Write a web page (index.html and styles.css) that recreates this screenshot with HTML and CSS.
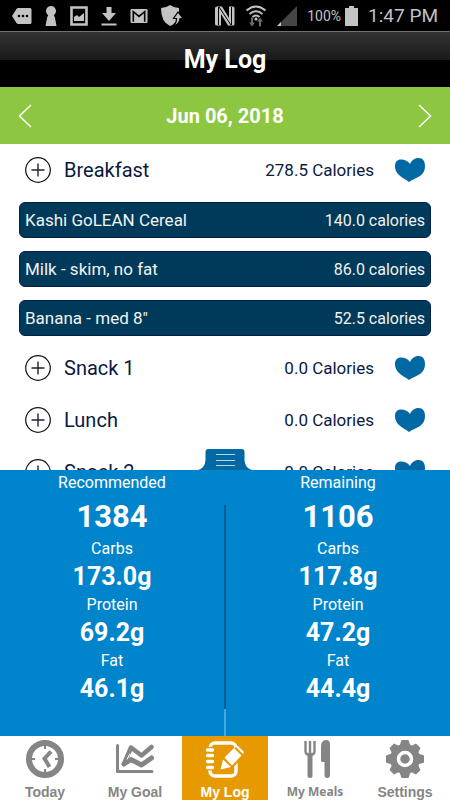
FILE: index.html
```html
<!DOCTYPE html>
<html lang="en">
<head>
    <meta charset="UTF-8">
    <meta name="viewport" content="width=device-width, initial-scale=1.0">
    <title>My Log</title>
    <link rel="stylesheet" href="styles.css">
</head>
<body>
    <!-- Shared shapes -->
    <svg class="sprite" aria-hidden="true">
        <symbol id="plus" viewBox="0 0 26 26">
            <circle cx="13" cy="13" r="12.3" fill="none" stroke="#111" stroke-width="1.2"/>
            <path d="M13 6.5v13M6.5 13h13" stroke="#1a2433" stroke-width="1.4"/>
        </symbol>
        <symbol id="heart" viewBox="0 0 30 24">
            <path d="M15 6C16.500 2.500 19.500 0 23.500 0 28 0 30 3 30 8c0 4.500-1.500 7.500-5 10-3.500 2.300-7.500 3.500-11 6-3-2.500-7-4-10-7C1.200 14.200 0 11.500 0 8 0 4 2.200 1.500 6 1.500c4 0 7 1.500 9 4.500z" fill="#0069a3"/>
        </symbol>
    </svg>

    <!-- Phone status bar -->
    <div class="status-bar">
        <div class="status-left">
            <svg width="20" height="16" viewBox="0 0 20 16"><path d="M6.500 0H18a1.500 1.500 0 0 1 1.500 1.500v13A1.500 1.500 0 0 1 18 16H6.500Q5 16 4.300 14.800L0 8l4.300-6.800Q5 0 6.500 0z" fill="#c3c3c3"/><circle cx="7" cy="8" r="1.300"/><circle cx="11" cy="8" r="1.300"/><circle cx="15" cy="8" r="1.300"/></svg>
            <svg width="12" height="20" viewBox="0 0 12 20"><path d="M6 0a5 5 0 0 1 3.500 8.500q-1.500 1 .3 2.500L11.500 20H.5L2.200 11q1.800-1.500 .3-2.500A5 5 0 0 1 6 0z" fill="#c3c3c3"/></svg>
            <svg width="18" height="20" viewBox="0 0 18 20"><path d="M1.500 1.500h15v17h-15z" fill="none" stroke="#c3c3c3" stroke-width="2.600"/><path d="M4 15V11l3-2 2 2 5-4v8z" fill="#c3c3c3"/></svg>
            <svg width="16" height="20" viewBox="0 0 16 20"><path d="M5.500 1h5v6H15l-7 8-7-8h4.500zM.5 17.500h15v2H.5z" fill="#c3c3c3"/></svg>
            <svg width="18" height="16" viewBox="0 0 19 16"><rect x=".5" y=".5" width="18" height="15" rx="1.500" fill="#c3c3c3"/><path d="M3.500 14V3.500l6 5 6-5V14" fill="none" stroke="#000" stroke-width="1.700"/></svg>
            <svg width="22" height="22" viewBox="0 0 22 22"><path d="M9 0q4 3 9 3v5l-5 6h2.500l-1 3Q12 20 9 21 0 17 0 3q5 0 9-3z" fill="#c3c3c3"/><path d="M17 7l5 6.500h-3q-.5 6-6.500 7.500 3-2.500 3-7.500h-3z" fill="#c3c3c3" stroke="#000" stroke-width="1.200"/></svg>
        </div>
        <div class="status-right">
            <svg width="20" height="20" viewBox="0 0 20 20"><path d="M0 2Q0 .5 2 .5h5L14 12V.5h4q1.500 0 1.500 1.500v16q0 1.500-1.500 1.500h-5L6 8v11.500H2q-2 0-2-1.500z" fill="#c3c3c3"/><path d="M3.500 1v18M4 1l12 18M16.500 1v18" stroke="#000" stroke-width="1"/></svg>
            <svg width="22" height="22" viewBox="0 0 22 22"><path d="M1.500 5.500q9.500-8 19 0M4.500 9q6.500-5.500 13 0M7.500 12q3.500-3 7 0" fill="none" stroke="#c3c3c3" stroke-width="2"/><circle cx="11" cy="14" r="1.500" fill="#c3c3c3"/><path d="M8 12.500v5h2L7 21.500 4 17.500h2v-5zM14 21.500v-5h-2l3-4 3 4h-2v5z" fill="#6c6c6c"/></svg>
            <svg width="20" height="20" viewBox="0 0 20 20"><path d="M20 0v20H0z" fill="#454545"/><path d="M4 16v4H0z" fill="#c3c3c3"/></svg>
            <span class="battery-level">100%</span>
            <svg width="13" height="20" viewBox="0 0 13 20"><path d="M4 0h5v2h4v18H0V2h4z" fill="#c3c3c3"/></svg>
            <span class="clock">1:47 PM</span>
        </div>
    </div>

    <header class="title-bar">
        <h1>My Log</h1>
    </header>

    <div class="date-bar">
        <button type="button" class="date-btn" aria-label="Previous day">
            <svg width="14" height="24" viewBox="0 0 14 24"><path d="M13 1L1.500 12 13 23" fill="none" stroke="#fff" stroke-width="1.500"/></svg>
        </button>
        <h2>Jun 06, 2018</h2>
        <button type="button" class="date-btn" aria-label="Next day">
            <svg width="14" height="24" viewBox="0 0 14 24"><path d="M1 1l11.500 11L1 23" fill="none" stroke="#fff" stroke-width="1.500"/></svg>
        </button>
    </div>

    <!-- Meals -->
    <main class="log">
        <div class="meal">
            <button type="button" class="icon-btn" aria-label="Add to Breakfast"><svg width="26" height="26"><use href="#plus"/></svg></button>
            <span class="meal-name">Breakfast</span>
            <span class="meal-calories">278.5 Calories</span>
            <button type="button" class="icon-btn" aria-label="Save Breakfast"><svg width="30" height="24"><use href="#heart"/></svg></button>
        </div>
        <ul class="foods">
            <li class="food"><span class="food-name">Kashi GoLEAN Cereal</span><span class="food-calories">140.0 calories</span></li>
            <li class="food"><span class="food-name">Milk - skim, no fat</span><span class="food-calories">86.0 calories</span></li>
            <li class="food"><span class="food-name">Banana - med 8"</span><span class="food-calories">52.5 calories</span></li>
        </ul>
        <div class="meal">
            <button type="button" class="icon-btn" aria-label="Add to Snack 1"><svg width="26" height="26"><use href="#plus"/></svg></button>
            <span class="meal-name">Snack 1</span>
            <span class="meal-calories">0.0 Calories</span>
            <button type="button" class="icon-btn" aria-label="Save Snack 1"><svg width="30" height="24"><use href="#heart"/></svg></button>
        </div>
        <div class="meal">
            <button type="button" class="icon-btn" aria-label="Add to Lunch"><svg width="26" height="26"><use href="#plus"/></svg></button>
            <span class="meal-name">Lunch</span>
            <span class="meal-calories">0.0 Calories</span>
            <button type="button" class="icon-btn" aria-label="Save Lunch"><svg width="30" height="24"><use href="#heart"/></svg></button>
        </div>
        <div class="meal">
            <button type="button" class="icon-btn" aria-label="Add to Snack 2"><svg width="26" height="26"><use href="#plus"/></svg></button>
            <span class="meal-name">Snack 2</span>
            <span class="meal-calories">0.0 Calories</span>
            <button type="button" class="icon-btn" aria-label="Save Snack 2"><svg width="30" height="24"><use href="#heart"/></svg></button>
        </div>
    </main>

    <!-- Daily totals -->
    <section class="totals">
        <button type="button" class="handle" aria-label="Toggle totals">
            <svg width="54" height="21" viewBox="0 0 54 21"><path d="M0 21Q7 19 7.500 11V3q0-3 3-3h33q3 0 3 3v8q.5 8 7.500 10z" fill="#0069a3"/><path d="M18 5.500h19M18 11.500h19M18 16.500h19" stroke="#b8d6e8" stroke-width="1"/></svg>
        </button>
        <div class="totals-column">
            <h3>Recommended</h3>
            <p class="total">1384</p>
            <p class="label">Carbs</p>
            <p class="value">173.0g</p>
            <p class="label">Protein</p>
            <p class="value">69.2g</p>
            <p class="label">Fat</p>
            <p class="value">46.1g</p>
        </div>
        <div class="divider"></div>
        <div class="totals-column">
            <h3>Remaining</h3>
            <p class="total">1106</p>
            <p class="label">Carbs</p>
            <p class="value">117.8g</p>
            <p class="label">Protein</p>
            <p class="value">47.2g</p>
            <p class="label">Fat</p>
            <p class="value">44.4g</p>
        </div>
    </section>

    <nav class="tabs">
        <a href="#today" class="tab">
            <svg width="40" height="40" viewBox="0 0 40 40"><circle cx="20" cy="20" r="16" fill="none" stroke="#858585" stroke-width="6"/><path d="M20 6v4M20 30v4M6 20h4M30 20h4" stroke="#858585" stroke-width="2"/><path d="M26 12.500L19.500 19.500l5 8.500" fill="none" stroke="#858585" stroke-width="4"/></svg>
            <span>Today</span>
        </a>
        <a href="#goal" class="tab">
            <svg width="40" height="40" viewBox="0 0 40 40"><path d="M2.500 6.500V32.500H37" fill="none" stroke="#858585" stroke-width="3" stroke-linecap="round" stroke-linejoin="round"/><path d="M9 25l7-16.500 10.500 8 10-8.500" fill="none" stroke="#858585" stroke-width="4.500" stroke-linecap="round" stroke-linejoin="round"/><path d="M9 25l7-4.500 10.500 5.500 10-7" fill="none" stroke="#858585" stroke-width="5" stroke-linecap="round" stroke-linejoin="round"/><path d="M15 14.500l-3 6M16 16l11 4.500 9-7" fill="none" stroke="#fff" stroke-width="1"/></svg>
            <span>My Goal</span>
        </a>
        <a href="#log" class="tab active">
            <svg width="40" height="40" viewBox="0 0 40 40"><rect x="5" y="4" width="26" height="33" rx="5" fill="none" stroke="#fff" stroke-width="3.500"/><path d="M2.500 11h5M2.500 16.500h5M2.500 22.500h5M2.500 28.500h5" stroke="#e69a00" stroke-width="6" stroke-linecap="round"/><path d="M2.500 11h5M2.500 16.500h5M2.500 22.500h5M2.500 28.500h5" stroke="#fff" stroke-width="3.500" stroke-linecap="round"/><path d="M16 32l3-12.500L32.500 6.500l9 8.500L27.500 29z" fill="#e69a00"/><path d="M15.500 30.500L18 20.500l8 7.500zM19.500 18.500l9.500-9.500 7.500 7.500-9.500 10zM30.500 7.500q1.500-1.500 3 0l4.500 4.500q1.500 1.500 0 3z" fill="#fff"/></svg>
            <span>My Log</span>
        </a>
        <a href="#meals" class="tab meals">
            <svg width="40" height="40" viewBox="0 0 40 40"><path d="M10.500 2v10q0 4 4.500 4t4.500-4V2M15 2v12" fill="none" stroke="#858585" stroke-width="2.400"/><path d="M15 16v20.500" stroke="#858585" stroke-width="5" stroke-linecap="round"/><path d="M26 22V8q0-7 5-7 4 0 4 4v31q0 3-2.700 3t-2.800-3V23q-3.500 0-3.500-1z" fill="#858585"/></svg>
            <span>My Meals</span>
        </a>
        <a href="#settings" class="tab">
            <svg width="40" height="40" viewBox="0 0 40 40"><circle cx="20" cy="20" r="15" fill="#858585"/><path d="M16.500 1h7l2 6h-11zM16.500 39h7l2-6h-11zM1 16.500v7l6 2v-11zM39 16.500v7l-6 2v-11zM4.500 9L9 4.500l6 3L7.500 15zM31 4.500L35.500 9l-3 6L25 7.500zM35.500 31L31 35.500l-6-3 7.500-7.500zM9 35.500L4.500 31l3-6 7.500 7.500z" fill="#858585"/><circle cx="20" cy="20" r="6.500" fill="none" stroke="#fff" stroke-width="3.500"/></svg>
            <span>Settings</span>
        </a>
    </nav>
</body>
</html>
```
FILE: styles.css
```css
/* Reset styles */
* {
    margin: 0;
    padding: 0;
    box-sizing: border-box;
}
body {
    display: flex;
    flex-direction: column;
    height: 100vh;
    overflow: hidden;
    background: #fff;
    color: #0a1a3f;
    font-family: Roboto, sans-serif;
}
svg {
    display: block;
    overflow: visible;
}
button {
    border: none;
    background: none;
    cursor: pointer;
}
.sprite {
    position: absolute;
    width: 0;
    height: 0;
}

/* Status bar */
.status-bar {
    display: flex;
    align-items: center;
    justify-content: space-between;
    height: 31px;
    padding: 0 12px;
    background: #000;
    color: #c3c3c3;
}
.status-left {
    display: flex;
    align-items: center;
    gap: 13px;
}
.status-right {
    display: flex;
    align-items: center;
    gap: 10px;
}
.battery-level {
    font-size: 14px;
}
.battery-level + svg {
    margin-left: -6px;
}
.clock {
    font-size: 19px;
}

/* Title */
.title-bar {
    display: flex;
    align-items: center;
    justify-content: center;
    height: 56px;
    border-top: 1px solid #707070;
    background: linear-gradient(#333, #1a1a1a 50%, #000 50%);
    color: #fff;
}
h1 {
    font-size: 25px;
    font-weight: bold;
}

/* Date picker */
.date-bar {
    display: flex;
    align-items: center;
    justify-content: space-between;
    height: 57px;
    padding: 0 18px;
    background: #8dc641;
    color: #fff;
}
h2 {
    font-size: 20px;
    font-weight: bold;
}

/* Meal list */
.log {
    flex: 1;
    min-height: 0;
    overflow: hidden;
}
.meal {
    display: flex;
    align-items: center;
    gap: 13px;
    height: 52px;
    padding: 0 25px;
}
.meal-name {
    flex: 1;
    font-size: 20px;
}
.meal-calories {
    margin-right: 8px;
    font-size: 17px;
}
.foods {
    display: flex;
    flex-direction: column;
    gap: 13px;
    padding: 6px 19px;
    list-style: none;
}
.food {
    display: flex;
    align-items: center;
    justify-content: space-between;
    height: 36px;
    padding: 0 5px;
    border: 1px solid #04204a;
    border-radius: 6px;
    background: #003a5a;
    color: #f2f2f2;
}
.food-name {
    font-size: 17px;
}
.food-calories {
    font-size: 16px;
}

/* Totals panel */
.totals {
    position: relative;
    display: flex;
    background: #0085cc;
    color: #fff;
    text-align: center;
}
.handle {
    position: absolute;
    bottom: 100%;
    left: 50%;
    transform: translateX(-50%);
}
.totals-column {
    flex: 1;
    padding-bottom: 31px;
}
h3 {
    font-size: 16px;
    font-weight: normal;
    line-height: 26px;
}
.total {
    font-size: 31px;
    font-weight: bold;
    line-height: 41px;
}
.label {
    font-size: 16px;
    line-height: 24px;
}
.value {
    font-size: 25px;
    font-weight: bold;
    line-height: 32px;
}
.divider {
    width: 2px;
    margin-top: 35px;
    background: linear-gradient(to top, #4aa6dc 27px, #005c94 27px);
}

/* Bottom tabs */
.tabs {
    display: grid;
    grid-template-columns: repeat(5, 1fr);
    height: 64px;
    background: #fff;
}
.tab {
    display: flex;
    flex-direction: column;
    align-items: center;
    gap: 4px;
    padding-top: 3px;
    color: #858585;
    font-family: "Liberation Sans", sans-serif;
    font-size: 14px;
    font-weight: bold;
    line-height: 18px;
    text-decoration: none;
}
.tab.active {
    margin: 0 2px;
    background: #e69a00;
    color: #fff;
}
.tab.meals {
    font-family: "Noto Sans", sans-serif;
    font-size: 12px;
}
```
